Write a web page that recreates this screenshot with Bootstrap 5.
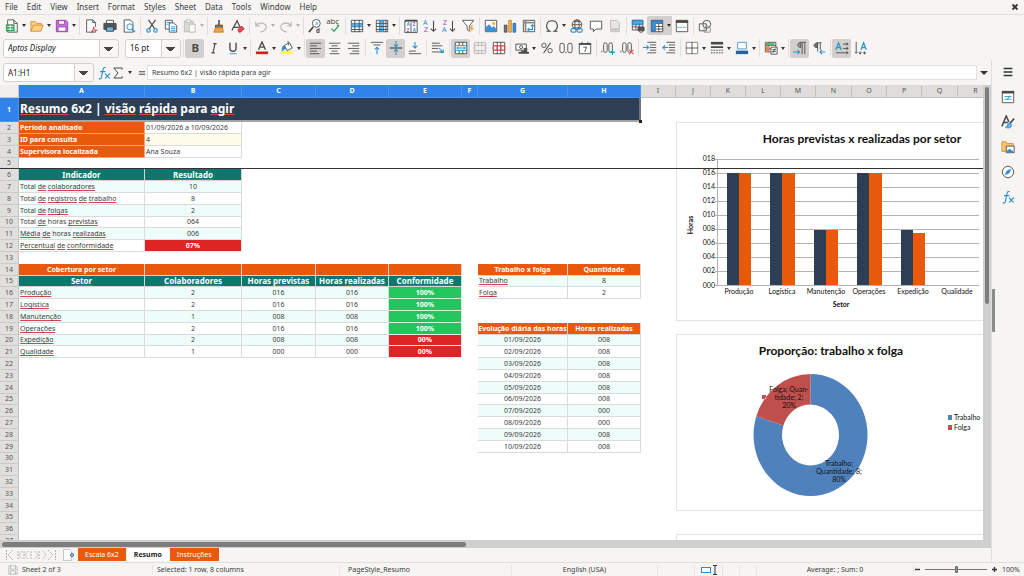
<!DOCTYPE html>
<html lang="pt-BR">
<head>
<meta charset="utf-8">
<meta name="viewport" content="width=device-width, initial-scale=1">
<title>Resumo 6x2</title>
<link href="https://cdn.jsdelivr.net/npm/bootstrap@5.3.0/dist/css/bootstrap.min.css" rel="stylesheet">
<script src="https://cdn.jsdelivr.net/npm/bootstrap@5.3.0/dist/js/bootstrap.bundle.min.js"></script>
<style>
:root{--ui:#f6f5f4;--line:#e0dfdd;--ink:#3a3d40;--blue:#2f83ea;--navy:#2d3f55;--orange:#e9590c;--teal:#0f766e;--hl:#2a8fd0}
body{font-family:"Noto Sans","Open Sans",sans-serif;font-size:8px;line-height:10px;color:var(--ink);background:var(--ui);overflow:hidden}
.menubar{height:15px;border-bottom:1px solid var(--line);padding:0 5px}
.menus{gap:9px}
.menubar a{color:var(--ink);text-decoration:none}
.plain{border:0;background:none;padding:0;color:#333}
.tools{height:22px;padding-left:2px}
.tools.second{height:24px;padding-left:3px}
.tb{width:19px;height:19px;flex:none;border:0;padding:0;background:none;border-radius:2px;display:flex;align-items:center;justify-content:center;color:#4a4a4a}
.tb.on,.dd.on{background:#d2cfcc}
.tb.on.open{border-radius:2px 0 0 2px}
.tb.slim{width:10px}
.dd{width:6px;height:19px;flex:none;border:0;padding:0;background:none;display:flex;align-items:center;justify-content:center}
.dd::before{content:"";border:2px solid transparent;border-top:3px solid #333;border-bottom:0}
.dd.wide{width:14px}
.dd.wide::before{border:4px solid transparent;border-top:4px solid #333;border-bottom:0}
.rule{width:4px;height:18px;flex:none;background:linear-gradient(var(--line),var(--line)) center/1px 100% no-repeat}
.tb svg{width:14px;height:14px}
svg{fill:none;stroke:currentColor;stroke-width:1;display:block}
svg text{stroke:none;fill:currentColor;font-family:"Noto Sans",sans-serif}
.b{color:var(--hl)}
.dim{opacity:.35}
.combo{appearance:none;height:19px;border:1px solid #d3d0cd;border-radius:3px;padding:0 0 0 4px;font-size:8px;line-height:16px;color:#222;outline:0;
 background:linear-gradient(#444,#444) right 5px top 7px/9px 1px no-repeat,linear-gradient(#444,#444) right 6px top 8px/7px 1px no-repeat,linear-gradient(#444,#444) right 7px top 9px/5px 1px no-repeat,linear-gradient(#444,#444) right 8px top 10px/3px 1px no-repeat,linear-gradient(#d3d0cd,#d3d0cd) right 18px top/1px 100% no-repeat,linear-gradient(90deg,#fff calc(100% - 19px),#f8f7f6 0)}
.fontname{width:116px;font-style:italic;margin-right:6px}.fontsize{width:56px}.namebox{width:91px}
.formulabar{height:25px;padding-left:3px}
.formula{height:15px;border:1px solid #e2e0de;background:#fff;font-size:7px;padding:0 4px;color:var(--ink);min-width:0}
.grow{min-height:0;min-width:0}
.side{width:33px;border-left:1px solid var(--line);padding-top:2px;gap:6px;position:relative}
.grip{position:absolute;left:0;top:229px;width:3px;height:43px;background:#8b8b8b;border-radius:1px 0 0 1px}
.sheetarea{background:#fff;overflow:hidden;min-width:0;position:relative}
.sheet{table-layout:fixed;width:994px;border-collapse:separate;border-spacing:0;font-size:7px;line-height:9px;color:#3c3c3c}
.sheet th,.sheet td{padding:0;white-space:nowrap;overflow:hidden;height:12px;font-weight:400;vertical-align:middle}
.sheet tbody tr:nth-child(5n) > *{height:11px}
.sheet thead th{text-align:center;background:#dedddc;border-right:1px solid #c4c3c2;border-bottom:1px solid #c4c3c2;color:#555;height:13px}
.sheet thead th.sel,.sheet tbody th.sel{background:var(--blue);color:#fff;border-color:#4a93ee;font-weight:700}
.sheet thead th:first-child{background:#f1f0ef}
.sheet tbody th{text-align:center;background:#e0dfde;border-right:1px solid #c4c3c2;border-bottom:1px solid #cbcac9;color:#555}
.sheet tbody tr:first-child > *{height:24px}
.sheet td.ttl{background:var(--navy);color:#fff;font-weight:700;font-size:12px;line-height:16px;padding-left:1px;border-bottom:2px solid #a3a5a8;border-right:2px solid #6f747b}
.lab{background:var(--orange);color:#fff;font-weight:700!important;border-bottom:1px solid #f3a37c;border-right:1px solid #f3a37c;padding-left:1px!important}
.oh,.th2{color:#fff;font-weight:700!important;text-align:center;border-right:1px solid #d9d4cf;border-bottom:1px solid #d9d4cf}
.oh{background:var(--orange)}.th2{background:var(--teal);font-size:8px}
.c,.l{border-right:1px solid #dbdbdb;border-bottom:1px solid #dbdbdb}
.c{text-align:center}.l{padding-left:1px!important}
.mint{background:#effdfa}.cream{background:#fffbea}
.ok,.bad{color:#fff;font-weight:700!important;text-align:center;border-bottom:1px solid #e8e8e8;border-right:1px solid #e8e8e8}
.ok{background:#22c55e}.bad{background:#dc2626}
.sp{text-decoration:underline #d8434e 1px;text-underline-offset:1px;text-decoration-skip-ink:none}
.clipmid{display:flex;justify-content:center}
.freeze{position:absolute;left:0;right:0;top:83px;height:1px;background:#333}
.chart{position:absolute;left:676px;background:#fff;stroke:none}
.chart text{font-family:Lato,sans-serif;font-size:7px;fill:#111}
.chart .ct{font-size:12px;font-weight:700}
.chart .at{font-weight:700}
.handle{position:absolute;left:639px;top:35px;width:3px;height:3px;background:#222}
.vbar{width:8px;background:#cfcfcf;padding:2px 2px}
.vbar div{height:48%;background:#7d7d7d;border-radius:3px}
.hbar{height:8px;background:#cfcfcf;padding:2px 2px}
.hbar div{width:47%;height:5px;background:#7d7d7d;border-radius:3px}
.tabs{height:14px}
.tabs .sheettab{height:13px;border:0;padding:0 7px;background:var(--orange);color:#fff;font-size:7px;margin-right:1px}
.tabs .sheettab.cur{background:#fff;color:#222;font-weight:700}
.status{height:14px;border-top:1px solid var(--line);font-size:7px;grid-template-columns:18fr 135fr 187fr 172fr 146fr 37fr 28fr 17fr 17fr 157fr 84fr 26fr}
.status > *{overflow:hidden;white-space:nowrap}
.status .cellb{border-right:1px solid #e6e5e3}
.zoomer{appearance:none;background:linear-gradient(#777,#777) center/100% 1px no-repeat;height:8px;min-width:0}
.zoomer::-webkit-slider-thumb{appearance:none;width:3px;height:7px;background:#999;border:1px solid #666;border-radius:1px}
</style>
</head>
<body class="d-flex flex-column vh-100">
<nav class="menubar d-flex align-items-center justify-content-between">
 <div class="menus d-flex">
  <a href="#">File</a><a href="#">Edit</a><a href="#">View</a><a href="#">Insert</a><a href="#">Format</a><a href="#">Styles</a><a href="#">Sheet</a><a href="#">Data</a><a href="#">Tools</a><a href="#">Window</a><a href="#">Help</a>
 </div>
 <button class="plain" aria-label="Close"><svg width="8" height="8" viewBox="0 0 8 8"><path d="M1.500 1.500l5 5M6.500 1.500l-5 5" stroke-width="1.800"/></svg></button>
</nav>

<div class="tools d-flex align-items-center">
 <button class="tb" aria-label="New"><svg viewBox="0 0 16 16"><path d="M3 1h7l4 4v10H3z" fill="#fff"/><path d="M10 1v4h4"/><path d="M1 6h10v8H1z" fill="#35a35a" stroke="none"/><path d="M2.500 8.500h7M2.500 11.500h7M6 7v6" stroke="#fff"/></svg></button><button class="dd" aria-label="New options"></button>
 <button class="tb" aria-label="Open"><svg viewBox="0 0 16 16"><path d="M1 14V3h5l1.500 2H13v2M1 14l3-7h11l-2.500 7z" fill="#fbd08a" stroke="#d98f2b"/></svg></button><button class="dd" aria-label="Open options"></button>
 <button class="tb" aria-label="Save"><svg viewBox="0 0 16 16"><path d="M1.500 1.500h11l2 2v11h-13z" fill="#c67ad6" stroke="#9a3fae"/><path d="M4 2h7v4H4zM3.500 9h9v5h-9z" fill="#fff" stroke="#9a3fae"/></svg></button><button class="dd" aria-label="Save options"></button>
 <span class="rule"></span>
 <button class="tb" aria-label="Export PDF"><svg viewBox="0 0 16 16"><path d="M3 1h7l3 3v11H3z" fill="#fff"/><path d="M10 1v3h3"/><path d="M9 9h5v5H9z" fill="#f6f5f4" stroke="none"/><path d="M8 15c2-1 3-4 3-6 0 3 2 4 4 4-2 0-5 1-7 2z" stroke="#d8333f"/></svg></button>
 <button class="tb" aria-label="Print"><svg viewBox="0 0 16 16"><path d="M4 1.500h8v4H4z" fill="#fff"/><path d="M1 5h14v7H1z" fill="#555"/><path d="M4 9h8v5H4z" fill="#6bb8ea" stroke="#3a3a3a"/></svg></button>
 <button class="tb" aria-label="Print preview"><svg viewBox="0 0 16 16"><path d="M2.500 1h7l3 3v11h-10z" fill="#fff"/><g class="b"><circle cx="9" cy="9" r="3.500" stroke="currentColor" fill="#e8f4fc"/><path d="M11.500 11.500L15 15" stroke-width="1.500"/></g></svg></button>
 <span class="rule"></span>
 <button class="tb" aria-label="Cut"><svg viewBox="0 0 16 16"><path d="M4 1l7 10M12 1L5 11" stroke-width="1.300"/><g class="b"><circle cx="4" cy="13" r="2" stroke-width="1.300"/><circle cx="12" cy="13" r="2" stroke-width="1.300"/></g></svg></button>
 <button class="tb" aria-label="Copy"><svg viewBox="0 0 16 16"><path d="M1.500 1.500h8v10h-8z" fill="#fff"/><path d="M6 4.500h5l3.500 3V15H6z" fill="#fff"/><path d="M8 9h5M8 11h5M8 13h5M3 4h5M3 6h2" stroke="#2a8fd0"/></svg></button>
 <button class="tb dim" aria-label="Paste"><svg viewBox="0 0 16 16"><path d="M1.500 2.500h10v12h-10z" fill="#aaa"/><path d="M4 1h5v3H4z" fill="#fff"/><path d="M7 6h7v9H7z" fill="#fff"/></svg></button><button class="dd dim" aria-label="Paste options"></button>
 <span class="rule"></span>
 <button class="tb" aria-label="Clone formatting"><svg viewBox="0 0 16 16"><path d="M8 1v6" stroke="#6d5a49" stroke-width="2"/><path d="M4 7h8v3H4z" fill="#777"/><path d="M4 10h8l1 5H2z" fill="#f0a34a" stroke="#d07c1c"/></svg></button>
 <button class="tb" aria-label="Clear formatting"><svg viewBox="0 0 16 16"><path d="M1 13L7 2l4 9M3 9.500h6" stroke-width="1.400"/><path d="M8 12l4-4 3 3-4 4H9z" fill="#e0474f" stroke="#c22b35"/></svg></button>
 <span class="rule"></span>
 <button class="tb dim" aria-label="Undo"><svg viewBox="0 0 16 16"><path d="M2 3v5h5M2 8c3-5 11-4 12 1 0 3-3 5-7 6" stroke-width="1.300"/></svg></button><button class="dd dim" aria-label="Undo history"></button>
 <button class="tb dim" aria-label="Redo"><svg viewBox="0 0 16 16"><path d="M14 3v5H9M14 8C11 3 3 4 2 9c0 3 3 5 7 6" stroke-width="1.300"/></svg></button><button class="dd dim" aria-label="Redo history"></button>
 <span class="rule"></span>
 <button class="tb" aria-label="Find and replace"><svg viewBox="0 0 16 16" overflow="visible"><circle cx="9.500" cy="5" r="4.500" fill="#fff"/><path d="M6 9l-5 6" stroke-width="1.800"/><text x="8" y="7" font-size="6" style="fill:#2a8fd0">a</text><text x="9" y="16" font-size="7" font-weight="700">d</text></svg></button>
 <button class="tb" aria-label="Spelling"><svg viewBox="0 0 16 16" overflow="visible"><text x="-1" y="6" font-size="9">abç</text><path d="M5 11l3 3 6-7" stroke="#33a35a" stroke-width="1.500"/></svg></button>
 <span class="rule"></span>
 <button class="tb" aria-label="Row"><svg viewBox="0 0 16 16"><path d="M1.500 1.500h13v13h-13z" fill="#fff"/><path d="M2 5h12v4H2z" fill="#63b3ea" stroke="#2a8fd0"/><path d="M1.500 12h13M5.500 1v14M10.500 1v14"/></svg></button><button class="dd" aria-label="Row options"></button>
 <button class="tb" aria-label="Column"><svg viewBox="0 0 16 16"><path d="M1.500 1.500h13v13h-13z" fill="#fff"/><path d="M5 2h5v12H5z" fill="#63b3ea" stroke="#2a8fd0"/><path d="M1.500 5h13M1.500 8.500h13M1.500 12h13M12.500 1v14"/></svg></button><button class="dd" aria-label="Column options"></button>
 <span class="rule"></span>
 <button class="tb" aria-label="Sort"><svg viewBox="0 0 16 16" overflow="visible"><path d="M1 1.500h14v14H1zM8 4v11" fill="#fff"/><path d="M1 2h14" stroke-width="2"/><text x="3" y="8" font-size="5" font-weight="700" style="fill:#2a8fd0">A</text><text x="3" y="15" font-size="5" font-weight="700" style="fill:#a349b8">Z</text><text x="10" y="8" font-size="5" font-weight="700" style="fill:#a349b8">Z</text><text x="10" y="15" font-size="5" font-weight="700" style="fill:#2a8fd0">A</text></svg></button>
 <button class="tb" aria-label="Sort ascending"><svg viewBox="0 0 16 16"><text x="0" y="7" font-size="8" style="fill:#2a8fd0">A</text><text x="1" y="15" font-size="8" style="fill:#a349b8">Z</text><path d="M12 2v12M9 11l3 3 3-3" stroke-width="1.200"/></svg></button>
 <button class="tb" aria-label="Sort descending"><svg viewBox="0 0 16 16"><text x="1" y="7" font-size="8" style="fill:#a349b8">Z</text><text x="0" y="15" font-size="8" style="fill:#2a8fd0">A</text><path d="M12 2v12M9 11l3 3 3-3" stroke-width="1.200"/></svg></button>
 <button class="tb" aria-label="Autofilter"><svg viewBox="0 0 16 16"><path d="M1.500 1.500h13L9.500 8v6L7 12V8z" fill="#fff"/><path d="M12 7l-3 5h3l-2 4 5-6h-3l2-3z" fill="#f0a34a" stroke="none"/></svg></button>
 <span class="rule"></span>
 <button class="tb" aria-label="Image"><svg viewBox="0 0 16 16"><path d="M1.500 1.500h13v13h-13z" fill="#fff"/><path d="M2 14V9l4-3 3 4 2-2 3 3v3z" fill="#3f8fd6" stroke="none"/><circle cx="11" cy="5" r="1.800" fill="#f0b34a" stroke="none"/></svg></button>
 <button class="tb" aria-label="Chart"><svg viewBox="0 0 16 16"><path d="M1.500 7h3v8h-3z" fill="#777"/><path d="M6.500 1.500h3V15h-3z" fill="#f7b557" stroke="#c88526"/><path d="M11.500 5h3v10h-3z" fill="#3f8fd6" stroke="#256aa8"/></svg></button>
 <button class="tb" aria-label="Pivot table"><svg viewBox="0 0 16 16"><path d="M1.500 1.500h13v13h-13z" fill="#fff"/><path d="M1.500 4h13M4 1.500v13" stroke-width="2" stroke="#888"/><path d="M7 12h5V7M10 8.500L12 6.500l2 2M8.500 10L6.500 12l2 2" stroke="#2a8fd0" stroke-width="1.200"/></svg></button>
 <span class="rule"></span>
 <button class="tb" aria-label="Special character"><svg viewBox="0 0 16 16"><path d="M1.500 14h4c-6-4-4-12 2.500-12s8.500 8 2.500 12h4" stroke-width="1.300"/></svg></button><button class="dd" aria-label="Recent characters"></button>
 <button class="tb" aria-label="Hyperlink"><svg viewBox="0 0 16 16"><circle cx="8" cy="6.500" r="5.500"/><path d="M2.500 6.500h11M4 3h8M4 10h8"/><ellipse cx="8" cy="6.500" rx="2.500" ry="5.500"/><g class="b"><rect x="1" y="11" width="6" height="4" rx="2" stroke-width="1.300"/><rect x="8" y="11" width="6" height="4" rx="2" stroke-width="1.300"/></g></svg></button>
 <button class="tb" aria-label="Comment"><svg viewBox="0 0 16 16"><path d="M1.500 2.500h13v9H8l-3 3v-3H1.500z" fill="#fff"/></svg></button>
 <button class="tb dim" aria-label="Headers and footers"><svg viewBox="0 0 16 16"><path d="M3 1.500h7l3 3v10H3z" fill="#ccc"/><path d="M4 12h8" stroke-width="2"/></svg></button>
 <span class="rule"></span>
 <button class="tb" aria-label="Print area"><svg viewBox="0 0 16 16"><path d="M1.500 1.500h12v11h-12zM1.500 9h12M5.500 1v11M9.500 1v11" fill="#fff"/><path d="M1.500 1.500h12v5h-12z" fill="#4ba3e0" stroke="#2a7fc0"/><path d="M8 9.500h7v4H8z" fill="#555"/><path d="M10 13h3v2h-3z" fill="#fff"/></svg></button>
 <button class="tb on open" aria-label="Freeze rows and columns"><svg viewBox="0 0 16 16"><path d="M1.500 1.500h13v13h-13z" fill="#fff"/><path d="M2 2h12v3H6v9H2z" fill="#3f8fd6" stroke="#256aa8"/><path d="M6 8.500h9M6 11.500h9M10 5v9"/></svg></button><button class="dd on" aria-label="Freeze options"></button>
 <button class="tb" aria-label="Split window"><svg viewBox="0 0 16 16"><path d="M1.500 1.500h13v13h-13z" fill="#fff"/><path d="M1 3h14" stroke-width="3"/><path d="M3 9.500h10" stroke="#2a8fd0" stroke-dasharray="2 1"/></svg></button>
 <span class="rule"></span>
 <button class="tb" aria-label="Show draw functions"><svg viewBox="0 0 16 16"><path d="M1.500 5.500h8v8h-8z"/><circle cx="10" cy="6" r="4.500"/><path d="M10 7l4 3v5H7v-4z" stroke="#888"/></svg></button>
</div>

<div class="tools second d-flex align-items-center">
 <select class="combo fontname" aria-label="Font name"><option>Aptos Display</option></select>
 <select class="combo fontsize" aria-label="Font size"><option>16 pt</option></select>
 <span class="rule"></span><button class="tb on" aria-label="Bold"><svg viewBox="0 0 16 16"><text x="4" y="13" font-size="13" font-weight="700">B</text></svg></button>
 <button class="tb" aria-label="Italic"><svg viewBox="0 0 16 16"><path d="M7 3h4M5 13.500h4M9.200 3L6.800 13.500" stroke-width="1.300"/></svg></button>
 <button class="tb" aria-label="Underline"><svg viewBox="0 0 16 16"><path d="M4.500 2v6c0 5 7 5 7 0V2" stroke-width="1.600"/><path d="M4 14.500h8" stroke="#2a8fd0"/></svg></button><button class="dd" aria-label="Underline styles"></button>
 <span class="rule"></span>
 <button class="tb" aria-label="Font colour"><svg viewBox="0 0 16 16"><path d="M4 10l4-9 4 9M5.500 7h5" stroke-width="1.500"/><path d="M1 13.500h14" stroke="#c9211e" stroke-width="3"/></svg></button><button class="dd" aria-label="Font colours"></button>
 <button class="tb" aria-label="Highlighting"><svg viewBox="0 0 16 16"><path d="M1 13h14" stroke="#ffff38" stroke-width="4"/><path d="M5 5l6-3 3 6-6 3z" fill="#fff"/><path d="M9 0l1 5"/><path d="M2 11c0-5 1-6 4-6l1 4c-2 0-3 1-3 2z" fill="#2a8fd0" stroke="none"/></svg></button><button class="dd" aria-label="Highlight colours"></button>
 <span class="rule"></span>
 <button class="tb on" aria-label="Align left"><svg viewBox="0 0 16 16"><path d="M1 2.500h13M1 5.500h8M1 8.500h13M1 11.500h8M1 14.500h11"/></svg></button>
 <button class="tb" aria-label="Align centre"><svg viewBox="0 0 16 16"><path d="M1 2.500h13M4 5.500h7M1 8.500h13M4 11.500h7M2 14.500h11"/></svg></button>
 <button class="tb" aria-label="Align right"><svg viewBox="0 0 16 16"><path d="M1 2.500h13M6 5.500h8M1 8.500h13M6 11.500h8M3 14.500h11"/></svg></button>
 <span class="rule"></span>
 <button class="tb" aria-label="Align top"><svg viewBox="0 0 16 16"><path d="M1 1.500h14M4 4.500h8"/><path d="M8 15V7M5.500 9.500L8 7l2.500 2.500" stroke="#2a8fd0" stroke-width="1.200"/></svg></button>
 <button class="tb on" aria-label="Centre vertically"><svg viewBox="0 0 16 16"><path d="M1 8h14" stroke-width="1.400"/><path d="M8 0v16M5.500 4L8 6.500 10.500 4M5.500 12L8 9.500l2.500 2.500" stroke="#2a8fd0" stroke-width="1.200"/></svg></button>
 <button class="tb" aria-label="Align bottom"><svg viewBox="0 0 16 16"><path d="M1 14.500h14M1 11.500h8"/><path d="M8 1v7M5.500 5.500L8 8l2.500-2.500" stroke="#2a8fd0" stroke-width="1.200"/></svg></button>
 <span class="rule"></span>
 <button class="tb" aria-label="Wrap text"><svg viewBox="0 0 16 16"><path d="M1 2.500h9M1 5.500h12M1 8.500h7M1 12.500h12"/><path d="M9 8l5 5M14 9.500V13h-3.500" stroke="#2a8fd0" stroke-width="1.200"/></svg></button>
 <span class="rule"></span>
 <button class="tb on" aria-label="Merge and centre"><svg viewBox="0 0 16 16"><path d="M1.500 1.500h13v13h-13zM6 1v14M10 1v14" fill="#fff"/><path d="M1.500 5h13v6h-13z" fill="#d9eefb" stroke="#2a8fd0"/><path d="M3 8h10M5 6.500L3.500 8 5 9.500M11 6.500L12.500 8 11 9.500" stroke="#2a8fd0"/></svg></button>
 <button class="tb dim" aria-label="Merge"><svg viewBox="0 0 16 16"><path d="M1.500 1.500h13v13h-13zM6 1v14M10 1v14" fill="#ddd"/><path d="M1.500 5h13v6h-13z" fill="#ddd"/></svg></button>
 <button class="tb" aria-label="Unmerge"><svg viewBox="0 0 16 16"><path d="M1.500 1.500h13v13h-13zM6 1v14M10 1v14" fill="#fff"/><path d="M1.500 5.500h13v5h-13zM6 5v6M10 5v6" stroke="#d8434e" stroke-width="1.300"/></svg></button>
 <span class="rule"></span>
 <button class="tb" aria-label="Currency"><svg viewBox="0 0 16 16"><path d="M1 3.500h12v7H1z"/><circle cx="7" cy="7" r="1.800"/><path d="M7 11h3V8h4v6H7z" fill="#555" stroke="none"/><path d="M4 13.500h12" stroke-width="2"/></svg></button><button class="dd" aria-label="Currencies"></button>
 <button class="tb" aria-label="Percent"><svg viewBox="0 0 16 16"><circle cx="4.500" cy="5" r="2.500"/><circle cx="11.500" cy="11" r="2.500"/><path d="M12 2L4 14" stroke-width="1.200"/></svg></button>
 <button class="tb" aria-label="Number"><svg viewBox="0 0 16 16"><rect x="1" y="2.500" width="5" height="11" rx="2.500"/><rect x="10" y="2.500" width="5" height="11" rx="2.500"/><path d="M8 12v2"/></svg></button>
 <button class="tb" aria-label="Date"><svg viewBox="0 0 16 16"><path d="M1.500 3h13v11.500h-13z" fill="#fff"/><path d="M1 3.500h14" stroke-width="2"/><path d="M4.500 1v3M11.500 1v3M6 7h4l-2.500 5.500"/></svg></button>
 <span class="rule"></span>
 <button class="tb" aria-label="Add decimal place"><svg viewBox="0 0 16 16"><path d="M1 11v2"/><rect x="3" y="2" width="4" height="11" rx="2"/><rect x="9" y="2" width="4" height="11" rx="2"/><path d="M10 13h6M13 10v6" stroke="#2a8fd0" stroke-width="1.200"/></svg></button>
 <button class="tb" aria-label="Delete decimal place"><svg viewBox="0 0 16 16"><path d="M1 11v2"/><rect x="3" y="2" width="4" height="11" rx="2"/><rect x="9" y="2" width="4" height="11" rx="2"/><path d="M10.500 10l5 5M15.500 10l-5 5" stroke="#e0474f" stroke-width="1.200"/></svg></button>
 <span class="rule"></span>
 <button class="tb" aria-label="Increase indent"><svg viewBox="0 0 16 16"><path d="M5 1.500h10M8 4.500h7M8 7.500h7M8 10.500h7M5 13.500h10"/><path d="M0 7.500h6M4 5l2.500 2.500L4 10" stroke="#2a8fd0" stroke-width="1.200"/></svg></button>
 <button class="tb" aria-label="Decrease indent"><svg viewBox="0 0 16 16"><path d="M5 1.500h10M8 4.500h7M8 7.500h7M8 10.500h7M5 13.500h10"/><path d="M1 7.500h6M3.500 5L1 7.500 3.500 10" stroke="#2a8fd0" stroke-width="1.200"/></svg></button>
 <span class="rule"></span>
 <button class="tb" aria-label="Borders"><svg viewBox="0 0 16 16"><path d="M1.500 1.500h13v13h-13z" fill="#fff" stroke="#8f7d68"/><path d="M8 1v14M1 8h14"/></svg></button><button class="dd" aria-label="Border presets"></button>
 <button class="tb" aria-label="Border style"><svg viewBox="0 0 16 16"><path d="M1 2.500h14" stroke-width="3"/><path d="M1 7h14" stroke-width="2"/><path d="M1 10.500h14M1 13.500h14" stroke-dasharray="2 1"/></svg></button><button class="dd" aria-label="Border styles"></button>
 <button class="tb" aria-label="Border colour"><svg viewBox="0 0 16 16"><path d="M3 1.500h10V9H3z" fill="#fff" stroke="#3f8fd6"/><path d="M1 13h14" stroke="#2a6099" stroke-width="4"/></svg></button><button class="dd" aria-label="Border colours"></button>
 <span class="rule"></span>
 <button class="tb" aria-label="Conditional formatting"><svg viewBox="0 0 16 16"><path d="M1.500 1.500h12v11h-12zM1.500 5h12M1.500 9h12M5.500 1v11" fill="#fff"/><path d="M2 2h10v3H2z" fill="#62b56d" stroke="none"/><path d="M2 6h4v6H2z" fill="#e9805a" stroke="none"/><path d="M8 7h7v8H8z" fill="#fff"/><path d="M9.500 10h4M9.500 12h4M13 8.500l-3 5"/></svg></button><button class="dd" aria-label="Conditional options"></button>
 <span class="rule"></span>
 <button class="tb on" aria-label="Left to right"><svg viewBox="0 0 16 16"><path d="M9 1.500h6M10.500 2v13M13.500 2v13"/><path d="M9 1.500v6c-4.500 0-4.500-6 0-6z" fill="#999"/><path d="M0 12.500h7M5 10l2.500 2.500L5 15" stroke="#2a8fd0" stroke-width="1.200"/></svg></button>
 <button class="tb" aria-label="Right to left"><svg viewBox="0 0 16 16"><path d="M5 2h6M6.500 2v10M9.500 2v8"/><path d="M6 2.500v5c-5 0-5-5 0-5z" fill="#777"/><path d="M9 12.500h6M11.500 10L9 12.500l2.500 2.500" stroke="#2a8fd0" stroke-width="1.200"/></svg></button>
 <span class="rule"></span>
 <button class="tb on" aria-label="Text left to right"><svg viewBox="0 0 16 16"><path d="M1 10l3-8 3 8M2 7.500h4" stroke="#2a8fd0" stroke-width="1.400"/><path d="M9 3.500h6M9 8.500h6M1 13.500h14M13 2l2 1.500L13 5M13 7l2 1.500-2 1.500M13 12l2 1.500-2 1.500"/></svg></button>
 <button class="tb" aria-label="Text top to bottom"><svg viewBox="0 0 16 16"><path d="M8 10l3-8 3 8M9 7.500h4" stroke="#2a8fd0" stroke-width="1.400"/><path d="M2.500 1v13M7 12v3M12 12v3M1 12.500L2.500 14 4 12.500M5.500 13L7 15l1.500-2M10.500 13l1.500 2 1.500-2"/></svg></button>
</div>

<div class="grow d-flex flex-fill">
 <main class="grow d-flex flex-column flex-fill">
  <div class="formulabar d-flex align-items-center">
   <select class="combo namebox" aria-label="Name box"><option>A1:H1</option></select>
   <button class="tb b" aria-label="Function wizard"><svg viewBox="0 0 16 16"><path d="M10 2c-3-1-3 1-3.500 4L5 13c-.5 2-2 2-3 1.500M3.500 6.500h6M9 9c2 0 3 5 6 5M15 9c-2 0-4 5-6 5" stroke-width="1.300"/></svg></button>
   <button class="tb slim" aria-label="Sum"><svg viewBox="0 0 12 16"><path d="M11 4V2H1l5 6-5 6h10v-2" stroke-width="1.200"/></svg></button><button class="dd mx-1" aria-label="Sum options"></button>
   <button class="tb slim" aria-label="Formula"><svg viewBox="0 0 16 16"><path d="M3 6h10M3 10h10" stroke-width="1.800"/></svg></button>
   <input class="formula flex-fill" aria-label="Input line" value="Resumo 6x2 | visão rápida para agir">
   <button class="dd wide" aria-label="Expand formula bar"></button>
  </div>
  <div class="grow d-flex flex-fill">
   <div class="sheetarea flex-fill">
    <table class="sheet">
     <colgroup><col style="width:19px"><col style="width:126px"><col style="width:97px"><col style="width:74px"><col style="width:73px"><col style="width:73px"><col style="width:16px"><col style="width:90px"><col style="width:73px"><col style="width:35px"><col style="width:35px"><col style="width:35px"><col style="width:35px"><col style="width:35px"><col style="width:36px"><col style="width:35px"><col style="width:35px"><col style="width:36px"><col style="width:36px"></colgroup>
     <thead><tr><th></th><th class="sel">A</th><th class="sel">B</th><th class="sel">C</th><th class="sel">D</th><th class="sel">E</th><th class="sel">F</th><th class="sel">G</th><th class="sel">H</th><th>I</th><th>J</th><th>K</th><th>L</th><th>M</th><th>N</th><th>O</th><th>P</th><th>Q</th><th>R</th></tr></thead>
     <tbody>
      <tr><th class="sel">1</th><td class="ttl" colspan="8"><span class="sp">Resumo</span> 6x2 | <span class="sp">visão</span> <span class="sp">rápida</span> para <span class="sp">agir</span></td></tr>
      <tr><th>2</th><td class="lab">Período analisado</td><td class="l">01/09/2026 a 10/09/2026</td></tr>
      <tr><th>3</th><td class="lab">ID para consulta</td><td class="l cream">4</td></tr>
      <tr><th>4</th><td class="lab">Supervisora localizada</td><td class="l">Ana Souza</td></tr>
      <tr><th>5</th></tr>
      <tr><th>6</th><td class="th2"><span class="sp">Indicador</span></td><td class="th2"><span class="sp">Resultado</span></td></tr>
      <tr><th>7</th><td class="l mint">Total <span class="sp">de</span> <span class="sp">colaboradores</span></td><td class="c mint">10</td></tr>
      <tr><th>8</th><td class="l">Total <span class="sp">de</span> <span class="sp">registros</span> <span class="sp">de</span> <span class="sp">trabalho</span></td><td class="c">8</td></tr>
      <tr><th>9</th><td class="l mint">Total <span class="sp">de</span> <span class="sp">folgas</span></td><td class="c mint">2</td></tr>
      <tr><th>10</th><td class="l">Total <span class="sp">de</span> horas <span class="sp">previstas</span></td><td class="c">064</td></tr>
      <tr><th>11</th><td class="l mint"><span class="sp">Média</span> <span class="sp">de</span> horas <span class="sp">realizadas</span></td><td class="c mint">006</td></tr>
      <tr><th>12</th><td class="l"><span class="sp">Percentual</span> <span class="sp">de</span> <span class="sp">conformidade</span></td><td class="bad">07%</td></tr>
      <tr><th>13</th></tr>
      <tr><th>14</th><td class="oh">Cobertura por setor</td><td class="oh"></td><td class="oh"></td><td class="oh"></td><td class="oh"></td><td></td><td class="oh">Trabalho x folga</td><td class="oh">Quantidade</td></tr>
      <tr><th>15</th><td class="th2"><span class="sp">Setor</span></td><td class="th2"><span class="sp">Colaboradores</span></td><td class="th2">Horas <span class="sp">previstas</span></td><td class="th2">Horas <span class="sp">realizadas</span></td><td class="th2"><span class="sp">Conformidade</span></td><td></td><td class="l mint"><span class="sp">Trabalho</span></td><td class="c mint">8</td></tr>
      <tr><th>16</th><td class="l mint"><span class="sp">Produção</span></td><td class="c mint">2</td><td class="c mint">016</td><td class="c mint">016</td><td class="ok">100%</td><td></td><td class="l"><span class="sp">Folga</span></td><td class="c">2</td></tr>
      <tr><th>17</th><td class="l"><span class="sp">Logística</span></td><td class="c">2</td><td class="c">016</td><td class="c">016</td><td class="ok">100%</td></tr>
      <tr><th>18</th><td class="l mint"><span class="sp">Manutenção</span></td><td class="c mint">1</td><td class="c mint">008</td><td class="c mint">008</td><td class="ok">100%</td></tr>
      <tr><th>19</th><td class="l"><span class="sp">Operações</span></td><td class="c">2</td><td class="c">016</td><td class="c">016</td><td class="ok">100%</td><td></td><td class="oh"><div class="clipmid">Evolução diária das horas</div></td><td class="oh">Horas realizadas</td></tr>
      <tr><th>20</th><td class="l mint"><span class="sp">Expedição</span></td><td class="c mint">2</td><td class="c mint">008</td><td class="c mint">008</td><td class="bad">00%</td><td></td><td class="c mint">01/09/2026</td><td class="c mint">008</td></tr>
      <tr><th>21</th><td class="l"><span class="sp">Qualidade</span></td><td class="c">1</td><td class="c">000</td><td class="c">000</td><td class="bad">00%</td><td></td><td class="c">02/09/2026</td><td class="c">008</td></tr>
      <tr><th>22</th><td colspan="6"></td><td class="c mint">03/09/2026</td><td class="c mint">008</td></tr>
      <tr><th>23</th><td colspan="6"></td><td class="c">04/09/2026</td><td class="c">008</td></tr>
      <tr><th>24</th><td colspan="6"></td><td class="c mint">05/09/2026</td><td class="c mint">008</td></tr>
      <tr><th>25</th><td colspan="6"></td><td class="c">06/09/2026</td><td class="c">008</td></tr>
      <tr><th>26</th><td colspan="6"></td><td class="c mint">07/09/2026</td><td class="c mint">000</td></tr>
      <tr><th>27</th><td colspan="6"></td><td class="c">08/09/2026</td><td class="c">000</td></tr>
      <tr><th>28</th><td colspan="6"></td><td class="c mint">09/09/2026</td><td class="c mint">008</td></tr>
      <tr><th>29</th><td colspan="6"></td><td class="c">10/09/2026</td><td class="c">008</td></tr>
      <tr><th>30</th></tr><tr><th>31</th></tr><tr><th>32</th></tr><tr><th>33</th></tr><tr><th>34</th></tr><tr><th>35</th></tr><tr><th>36</th></tr><tr><th>37</th></tr>
     </tbody>
    </table>
    <svg class="chart" style="top:37px" width="372" height="200" viewBox="676 122 372 200" role="img" aria-label="Horas previstas x realizadas por setor">
     <rect x="676.500" y="122.500" width="371" height="198" fill="#fff" stroke="#e3e3e3"/>
     <text class="ct" x="862" y="143" text-anchor="middle">Horas previstas x realizadas por setor</text>
     <path d="M715 159.500H979M715 173.500H979M715 187.500H979M715 201.500H979M715 215.500H979M715 229.500H979M715 243.500H979M715 257.500H979M715 271.500H979M715 285.500H979M717.500 159V286" stroke="#b3b3b3"/>
     <g fill="#2d3f55"><path d="M727 173h12v112h-12zM770 173h12v112h-12zM814 230h12v55h-12zM857 173h12v112h-12zM901 230h12v55h-12z"/></g>
     <g fill="#e9590c"><path d="M739 173h12v112h-12zM782 173h13v112h-13zM826 230h12v55h-12zM869 173h13v112h-13zM913 233h12v52h-12z"/></g>
     <g text-anchor="end"><text x="715" y="161">018</text><text x="715" y="175">016</text><text x="715" y="189">014</text><text x="715" y="203">012</text><text x="715" y="217">010</text><text x="715" y="231">008</text><text x="715" y="245">006</text><text x="715" y="259">004</text><text x="715" y="273">002</text><text x="715" y="288">000</text></g>
     <g text-anchor="middle"><text x="739" y="294">Produção</text><text x="782" y="294">Logística</text><text x="826" y="294">Manutenção</text><text x="869" y="294">Operações</text><text x="913" y="294">Expedição</text><text x="957" y="294">Qualidade</text>
     <text class="at" x="841" y="307">Setor</text><text class="at" transform="translate(693 225) rotate(-90)">Horas</text></g>
    </svg>
    <svg class="chart" style="top:248px" width="372" height="179" viewBox="676 333 372 179" role="img" aria-label="Proporção: trabalho x folga">
     <rect x="676.500" y="334.500" width="371" height="176" fill="#fff" stroke="#e3e3e3"/>
     <text class="ct" x="831" y="355" text-anchor="middle">Proporção: trabalho x folga</text>
     <path fill="#4f81bd" d="M810.500 374A57 61 0 1 1 756.300 416.200L783.400 425.600A28.500 30.500 0 1 0 810.500 404.500z"/>
     <path fill="#c0504d" d="M810.500 374A57 61 0 0 0 756.300 416.200L783.400 425.600A28.500 30.500 0 0 1 810.500 404.500zM762 395h4v4h-4z"/>
     <g text-anchor="middle"><text x="789" y="392">Folga; Quan-</text><text x="789" y="400">tidade; 2;</text><text x="789" y="408">20%</text><text x="839" y="466">Trabalho;</text><text x="839" y="474">Quantidade; 8;</text><text x="839" y="482">80%</text></g>
     <path fill="#4f81bd" d="M948 415h4v5h-4z"/><path fill="#c0504d" d="M948 425h4v5h-4z"/>
     <text x="954" y="420">Trabalho</text><text x="954" y="430">Folga</text>
    </svg>
    <svg class="chart" style="top:448px" width="372" height="20" viewBox="676 533 372 20" aria-hidden="true"><path d="M676.500 553v-18.500h371" stroke="#e3e3e3" fill="#fff"/></svg>
    <div class="freeze"></div><div class="handle"></div>
   </div>
   <div class="vbar flex-shrink-0"><div></div></div>
  </div>
  <div class="hbar"><div></div></div>
  <div class="tabs d-flex">
   <button class="plain dim ms-1" aria-label="Sheet navigation"><svg width="54" height="12" viewBox="0 0 54 12"><path d="M2.500 1v10M9 1L4 6l5 5M14 2v8M18 2l-3 4 3 4M20 2v8M24 2l-3 4 3 4M27 2v8M31 2l3 4-3 4M35 2v8M39 2l3 4-3 4M44 1l5 5-5 5M51.500 1v10" stroke-dasharray="2 1"/></svg></button>
   <button class="plain ms-1 me-1" aria-label="Add sheet"><svg width="12" height="12" viewBox="0 0 12 12"><path d="M1.500.5h6l2 2v9h-8z" fill="#fff" stroke="#c9c9c9"/><circle cx="10" cy="6" r="1.500" fill="#bcd4f5" stroke="#3465a4"/></svg></button>
   <button class="sheettab">Escala 6x2</button><button class="sheettab cur">Resumo</button><button class="sheettab">Instruções</button>
  </div>
 </main>
 <aside class="side d-flex flex-column align-items-center flex-shrink-0">
  <div class="grip"></div>
  <button class="tb" aria-label="Sidebar settings"><svg viewBox="0 0 16 16"><path d="M3 4h10M3 8h10M3 12h10" stroke-width="1.600" stroke="#333"/></svg></button>
  <button class="tb" aria-label="Properties"><svg viewBox="0 0 16 16"><path d="M1.500 2h13v12.500h-13z" fill="#fff"/><path d="M1 2.500h14" stroke-width="3"/><path d="M4 7.500h8M4 10.500h8M10 6.500l-3 5" stroke="#2a8fd0"/></svg></button>
  <button class="tb" aria-label="Styles"><svg viewBox="0 0 16 16"><path d="M1 13L6 1l3 7M3 8.500h5" stroke-width="1.700"/><path d="M15 4l-5 6" stroke-width="2"/><path d="M10 9c-3 0-2 4-5 5 4 2 8 0 7-3z" fill="#63b3ea" stroke="#2a8fd0"/></svg></button>
  <button class="tb" aria-label="Gallery"><svg viewBox="0 0 16 16"><path d="M1 13V2h5l1 2h7v9z" fill="#f9c173" stroke="#dd912f"/><path d="M6 7h9v7.500H6z" fill="#fff"/><path d="M7 14v-2l3-2 4 3v1z" fill="#2a8fd0" stroke="none"/></svg></button>
  <button class="tb" aria-label="Navigator"><svg viewBox="0 0 16 16"><circle cx="8" cy="8" r="6.500" fill="#fff"/><path d="M12 4l-2.500 5.500L4 12l2.500-5.500z" fill="#2a8fd0" stroke="none"/></svg></button>
  <button class="tb b" aria-label="Functions"><svg viewBox="0 0 16 16"><path d="M10 2c-3-1-3 1-3.500 4L5 13c-.5 2-2 2-3 1.500M3.500 6.500h6M9 9c2 0 3 5 6 5M15 9c-2 0-4 5-6 5" stroke-width="1.300"/></svg></button>
 </aside>
</div>

<footer class="status d-grid align-items-center">
 <span class="dim ps-1"><svg class="ms-1" width="10" height="10" viewBox="0 0 12 12"><path d="M1 1h9l1 1v9H1zM3 1v4h6V1M3 11V7h6v4"/></svg></span>
 <span class="cellb ps-1">Sheet 2 of 3</span>
 <span class="cellb ps-1">Selected: 1 row, 8 columns</span>
 <span class="cellb ps-2">PageStyle_Resumo</span>
 <span class="cellb text-center">English (USA)</span>
 <span class="cellb">&nbsp;</span>
 <span class="cellb ps-1"><svg width="20" height="10" viewBox="0 0 20 10"><rect x="2.500" y="2.500" width="9" height="5" stroke="#2a8fd0" fill="#fff"/><path d="M14 .5h4M14 9.500h4M16 1v8" stroke="#333"/></svg></span>
 <span class="cellb">&nbsp;</span><span class="cellb">&nbsp;</span>
 <span class="cellb text-center">Average: ; Sum: 0</span>
 <span class="d-flex align-items-center gap-1"><button class="plain ms-auto" aria-label="Zoom out"><svg width="7" height="7" viewBox="0 0 7 7"><path d="M1 3.500h5" stroke-width="1.400"/></svg></button><input class="zoomer flex-fill" type="range" aria-label="Zoom" value="50"><button class="plain" aria-label="Zoom in"><svg width="7" height="7" viewBox="0 0 7 7"><path d="M1 3.500h5M3.500 1v5" stroke-width="1.400"/></svg></button></span>
 <span class="ps-1">100%</span>
</footer>
</body>
</html>
